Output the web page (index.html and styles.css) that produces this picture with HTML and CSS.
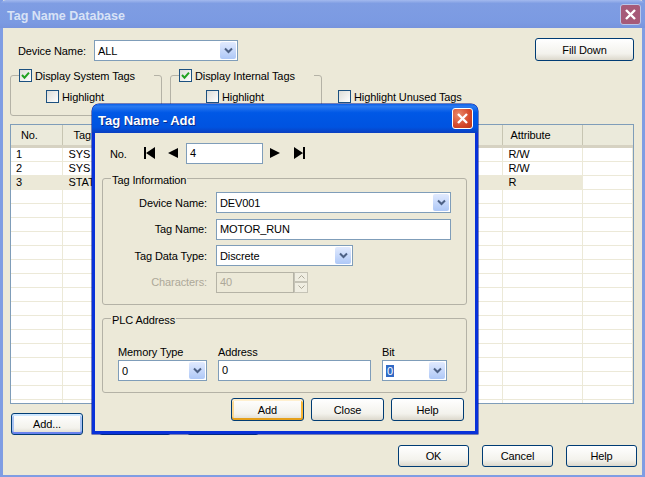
FILE: index.html
```html
<!DOCTYPE html>
<html lang="en">
<head>
<meta charset="UTF-8">
<title>Tag Name Database</title>
<link rel="stylesheet" href="styles.css">
</head>
<body>
<div class="window">
    <div class="titlebar">
        <span class="title">Tag Name Database</span>
        <div class="close close-faded">
            <svg width="13" height="13" viewBox="0 0 13 13"><path d="M2 2l9 9M11 2l-9 9" stroke="#fff" stroke-width="2.4" fill="none"/></svg>
        </div>
    </div>
    <div class="content">
        <div class="device-row">
            <label class="device-label">Device Name:</label>
            <div class="combo device-combo">
                <span class="combo-text">ALL</span>
                <span class="combo-btn"><svg width="9" height="7" viewBox="0 0 9 7"><path d="M1 1.5l3.5 3.5L8 1.5" stroke="#4d6185" stroke-width="2" fill="none"/></svg></span>
            </div>
            <button class="btn fill-down">Fill Down</button>
        </div>

        <div class="groups-row">
            <fieldset class="group tag-group">
                <legend class="check-legend"><span class="check checked"><svg width="11" height="11" viewBox="0 0 11 11"><path d="M2 5l2.5 2.7L9 2.6" stroke="#21a121" stroke-width="2" fill="none"/></svg></span>Display System Tags</legend>
                <div class="check-row"><span class="check"></span>Highlight</div>
            </fieldset>
            <fieldset class="group tag-group">
                <legend class="check-legend"><span class="check checked"><svg width="11" height="11" viewBox="0 0 11 11"><path d="M2 5l2.5 2.7L9 2.6" stroke="#21a121" stroke-width="2" fill="none"/></svg></span>Display Internal Tags</legend>
                <div class="check-row"><span class="check"></span>Highlight</div>
            </fieldset>
            <div class="check-row unused"><span class="check"></span>Highlight Unused Tags</div>
        </div>

        <div class="list">
            <table class="tags">
                <colgroup><col class="col-no"><col class="col-tag"><col class="col-attr"><col></colgroup>
                <thead>
                    <tr><th>No.</th><th class="th-tag">Tag</th><th class="th-attr">Attribute</th><th></th></tr>
                </thead>
                <tbody>
                    <tr><td>1</td><td>SYS</td><td>R/W</td><td></td></tr>
                    <tr><td>2</td><td>SYS</td><td>R/W</td><td></td></tr>
                    <tr class="selected"><td>3</td><td>STAT</td><td>R</td><td></td></tr>
                    <tr><td></td><td></td><td></td><td></td></tr>
                    <tr><td></td><td></td><td></td><td></td></tr>
                    <tr><td></td><td></td><td></td><td></td></tr>
                    <tr><td></td><td></td><td></td><td></td></tr>
                    <tr><td></td><td></td><td></td><td></td></tr>
                    <tr><td></td><td></td><td></td><td></td></tr>
                    <tr><td></td><td></td><td></td><td></td></tr>
                    <tr><td></td><td></td><td></td><td></td></tr>
                    <tr><td></td><td></td><td></td><td></td></tr>
                    <tr><td></td><td></td><td></td><td></td></tr>
                    <tr><td></td><td></td><td></td><td></td></tr>
                    <tr><td></td><td></td><td></td><td></td></tr>
                    <tr><td></td><td></td><td></td><td></td></tr>
                    <tr><td></td><td></td><td></td><td></td></tr>
                    <tr><td></td><td></td><td></td><td></td></tr>
                    <tr><td></td><td></td><td></td><td></td></tr>
                </tbody>
            </table>
        </div>

        <div class="list-buttons">
            <button class="btn btn-default">Add...</button>
            <button class="btn"></button>
            <button class="btn"></button>
        </div>

        <div class="window-buttons">
            <button class="btn">OK</button>
            <button class="btn">Cancel</button>
            <button class="btn">Help</button>
        </div>
    </div>
</div>

<div class="dialog">
    <div class="dialog-title">
        <span class="title">Tag Name - Add</span>
        <div class="close">
            <svg width="13" height="13" viewBox="0 0 13 13"><path d="M2 2l9 9M11 2l-9 9" stroke="#fff" stroke-width="2.4" fill="none"/></svg>
        </div>
    </div>
    <div class="dialog-body">
        <div class="nav-row">
            <span class="nav-label">No.</span>
            <svg class="nav-first" width="11" height="12" viewBox="0 0 11 12"><path d="M0 0h2v12H0zM11 0v12L2 6z" fill="#000"/></svg>
            <svg class="nav-prev" width="10" height="10" viewBox="0 0 10 10"><path d="M10 0v10L0 5z" fill="#000"/></svg>
            <div class="field nav-field">4</div>
            <svg class="nav-next" width="10" height="10" viewBox="0 0 10 10"><path d="M0 0v10l10-5z" fill="#000"/></svg>
            <svg class="nav-last" width="11" height="12" viewBox="0 0 11 12"><path d="M0 0v12l9-6zM9 0h2v12H9z" fill="#000"/></svg>
        </div>

        <fieldset class="group info-group">
            <legend>Tag Information</legend>
            <div class="info-grid">
                <label>Device Name:</label>
                <div class="combo">
                    <span class="combo-text">DEV001</span>
                    <span class="combo-btn"><svg width="9" height="7" viewBox="0 0 9 7"><path d="M1 1.5l3.5 3.5L8 1.5" stroke="#4d6185" stroke-width="2" fill="none"/></svg></span>
                </div>
                <label>Tag Name:</label>
                <div class="field">MOTOR_RUN</div>
                <label>Tag Data Type:</label>
                <div class="combo type-combo">
                    <span class="combo-text">Discrete</span>
                    <span class="combo-btn"><svg width="9" height="7" viewBox="0 0 9 7"><path d="M1 1.5l3.5 3.5L8 1.5" stroke="#4d6185" stroke-width="2" fill="none"/></svg></span>
                </div>
                <label class="disabled">Characters:</label>
                <div class="spin">
                    <div class="field field-disabled">40</div>
                    <div class="spin-btns">
                        <span><svg width="7" height="4" viewBox="0 0 7 4"><path d="M.5 3.5l3-3 3 3" stroke="#aca899" fill="none"/></svg></span>
                        <span><svg width="7" height="4" viewBox="0 0 7 4"><path d="M.5.5l3 3 3-3" stroke="#aca899" fill="none"/></svg></span>
                    </div>
                </div>
            </div>
        </fieldset>

        <fieldset class="group plc-group">
            <legend>PLC Address</legend>
            <div class="plc-grid">
                <label>Memory Type</label>
                <label>Address</label>
                <label>Bit</label>
                <div class="combo">
                    <span class="combo-text">0</span>
                    <span class="combo-btn"><svg width="9" height="7" viewBox="0 0 9 7"><path d="M1 1.5l3.5 3.5L8 1.5" stroke="#4d6185" stroke-width="2" fill="none"/></svg></span>
                </div>
                <div class="field">0</div>
                <div class="combo">
                    <span class="combo-text"><span class="sel">0</span></span>
                    <span class="combo-btn"><svg width="9" height="7" viewBox="0 0 9 7"><path d="M1 1.5l3.5 3.5L8 1.5" stroke="#4d6185" stroke-width="2" fill="none"/></svg></span>
                </div>
            </div>
        </fieldset>

        <div class="dialog-buttons">
            <button class="btn btn-hot">Add</button>
            <button class="btn">Close</button>
            <button class="btn">Help</button>
        </div>
    </div>
</div>
</body>
</html>
```

FILE: styles.css
```css
* {
    box-sizing: border-box;
}

body {
    margin: 0;
    width: 645px;
    height: 477px;
    overflow: hidden;
    position: relative;
    font-family: "Liberation Sans", Arial, sans-serif;
    font-size: 11px;
    letter-spacing: -0.1px;
    color: #000;
    background: #ece9d8;
}

/* outer window, inactive */
.window {
    width: 645px;
    height: 477px;
    display: flex;
    flex-direction: column;
    background: #ece9d8;
    border-left: 3px solid #7f9de3;
    border-right: 3px solid #7f9de3;
    border-bottom: 2px solid #7f9de3;
}

.titlebar {
    flex: none;
    height: 28px;
    margin: 0 -3px;
    padding: 0 4px 0 7px;
    display: flex;
    align-items: center;
    justify-content: space-between;
    background: linear-gradient(#a3b9ee 0, #7f9de3 12%, #7b9ae2 80%, #7794dd 100%);
    border-radius: 6px 6px 0 0;
}

.title {
    padding-top: 3px;
    font-weight: bold;
    font-size: 13px;
    letter-spacing: 0;
}

.titlebar .title {
    font-size: 12.5px;
    color: #d8e2f6;
}

.close {
    width: 21px;
    height: 21px;
    display: flex;
    align-items: center;
    justify-content: center;
    border: 1px solid #fff;
    border-radius: 3px;
    background: radial-gradient(circle at 30% 30%, #e98a6c, #d5482a 60%, #b93518);
}

.close-faded {
    border-color: #b9c6e8;
    background: #a65a78;
}

.content {
    flex: 1;
    padding: 10px 0 0 7px;
}

.device-row {
    display: flex;
    align-items: flex-end;
    height: 23px;
    margin-right: 8px;
}

.device-label {
    align-self: center;
    margin-top: 2px;
    padding-left: 8px;
    width: 84px;
}

.device-combo {
    width: 144px;
}

/* controls */
.btn {
    height: 22px;
    width: 71px;
    padding: 0;
    font: inherit;
    letter-spacing: inherit;
    color: #000;
    border: 1px solid #003c74;
    border-radius: 3px;
    background: linear-gradient(#fff, #f3f2ec 70%, #dcd8cc);
}

.fill-down {
    width: 99px;
    height: 23px;
    margin-left: auto;
}

.btn-default {
    box-shadow: inset 0 2px 0 #cee7ff, inset 0 -2px 0 #6982ee, inset 2px 0 0 #a9c3f2, inset -2px 0 0 #a9c3f2;
}

.btn-hot {
    box-shadow: inset 0 2px 0 #fff0cf, inset 0 -2px 0 #e5a01a, inset 2px 0 0 #fbd892, inset -2px 0 0 #f8b636;
}

.combo {
    height: 21px;
    display: flex;
    align-items: center;
    justify-content: space-between;
    padding: 1px;
    background: #fff;
    border: 1px solid #7f9db9;
}

.combo-text {
    padding-left: 2px;
}

.combo-btn {
    width: 16px;
    height: 17px;
    display: flex;
    align-items: center;
    justify-content: center;
    border-radius: 2px;
    background: linear-gradient(#e1eafe, #aec8f7);
}

.field {
    height: 21px;
    line-height: 19px;
    padding-left: 3px;
    background: #fff;
    border: 1px solid #7f9db9;
}

.field-disabled {
    color: #aca899;
    background: #ece9d8;
    border-color: #b5b3a6;
}

.sel {
    display: inline-block;
    padding: 0 1px;
    color: #fff;
    background: #316ac5;
}

.check {
    width: 13px;
    height: 13px;
    flex: none;
    display: inline-flex;
    align-items: center;
    justify-content: center;
    border: 1px solid #1c5180;
    background: linear-gradient(135deg, #dcdcd7, #fff);
}

.check-row {
    display: flex;
    align-items: center;
    gap: 3px;
}

.group {
    margin: 0;
    padding: 0;
    border: 1px solid #b4b2a6;
    border-radius: 3px;
    min-width: 0;
}

.groups-row {
    display: flex;
    height: 47px;
    margin-top: 8px;
}

.tag-group {
    width: 152px;
    height: 47px;
    margin-right: 8px;
}

.tag-group .check-row {
    margin: 8px 0 0 35px;
}

.check-legend {
    display: flex;
    align-items: center;
    gap: 3px;
    margin-left: 8px;
    height: 13px;
    white-space: nowrap;
}

.unused {
    align-self: flex-start;
    margin: 21px 0 0 8px;
}

/* tag list */
.list {
    width: 624px;
    height: 280px;
    margin-top: 8px;
    overflow: hidden;
    background: #fff;
    border: 1px solid #7f9db9;
}

.tags {
    width: 622px;
    table-layout: fixed;
    border-collapse: collapse;
}

.col-no {
    width: 51px;
}

.col-tag {
    width: 440px;
}

.col-attr {
    width: 80px;
}

.tags th {
    height: 21px;
    padding: 0 0 0 10px;
    text-align: left;
    font-weight: normal;
    background: #ebeadb;
    border-right: 1px solid #c7c5b2;
    border-bottom: 3px solid #d6d2c2;
}

.tags th:last-child {
    border-right: none;
}

.tags .th-tag {
    padding-left: 11px;
}

.tags .th-attr {
    padding-left: 8px;
}

.tags td {
    height: 14px;
    padding: 0 0 0 6px;
    line-height: 13px;
    white-space: nowrap;
    overflow: hidden;
    border-right: 1px solid #ece9d8;
    border-bottom: 1px solid #ece9d8;
}

.tags td:first-child {
    padding-left: 5px;
}

.tags .selected td {
    background: #ece9d8;
}

.tags .selected td:last-child {
    background: #fff;
}

.list-buttons {
    display: flex;
    gap: 16px;
    margin: 9px 0 0 1px;
}

.list-buttons .btn {
    width: 72px;
}

.window-buttons {
    display: flex;
    justify-content: flex-end;
    gap: 13px;
    margin: 10px 5px 0 0;
}

/* active dialog on top */
.dialog {
    position: absolute;
    left: 92px;
    top: 104px;
    width: 386px;
    height: 330px;
    display: flex;
    flex-direction: column;
    background: #ece9d8;
    border: 3px solid #0831d9;
    border-top: none;
    border-radius: 7px 7px 0 0;
    box-shadow: 0 0 0 0.5px #00138c;
}

.dialog-title {
    flex: none;
    height: 29px;
    margin: 0 -3px;
    padding: 0 5px 0 6px;
    display: flex;
    align-items: center;
    justify-content: space-between;
    background: linear-gradient(#0a5fe8 0, #2b7af0 8%, #0058e6 30%, #0053e0 80%, #0a3fc0 100%);
    border-radius: 7px 7px 0 0;
}

.dialog-title .title {
    color: #fff;
    text-shadow: 1px 1px 0 #0a2a8a;
}

.dialog-body {
    flex: 1;
    padding: 0 8px 0 7px;
}

.nav-row {
    display: flex;
    align-items: center;
    height: 20px;
    margin-top: 10px;
}

.nav-label {
    width: 34px;
    margin-left: 8px;
    padding-top: 2px;
}

.nav-prev {
    margin-left: 13px;
}

.nav-field {
    width: 77px;
    margin-left: 8px;
}

.nav-next {
    margin-left: 7px;
}

.nav-last {
    margin-left: 14px;
}

.info-group {
    height: 134px;
    margin-top: 8px;
}

.group legend {
    margin-left: 8px;
    padding: 3px 1px 0;
}

.group .check-legend {
    padding: 0 19px 0 0;
}

.info-grid {
    display: grid;
    grid-template-columns: 104px 235px;
    column-gap: 9px;
    row-gap: 5.5px;
    align-items: center;
    margin-top: 6px;
}

.info-grid label {
    text-align: right;
}

.disabled {
    color: #aca899;
}

.type-combo {
    width: 137px;
}

.spin {
    display: flex;
    width: 92px;
}

.spin .field {
    flex: 1;
}

.spin-btns {
    width: 14px;
    height: 21px;
    display: flex;
    flex-direction: column;
}

.spin-btns span {
    flex: 1;
    display: flex;
    align-items: center;
    justify-content: center;
    background: #f0eee2;
    border: 1px solid #c5c3b6;
}

.plc-group {
    height: 82px;
    margin-top: 6px;
}

.plc-grid {
    display: grid;
    grid-template-columns: 89px 153px 65px;
    column-gap: 11px;
    row-gap: 2px;
    margin: 20px 0 0 15px;
}

.dialog-buttons {
    display: flex;
    justify-content: flex-end;
    gap: 7px;
    margin: 5px 3px 0 0;
}

.dialog-buttons .btn {
    width: 73px;
    height: 23px;
}
```
